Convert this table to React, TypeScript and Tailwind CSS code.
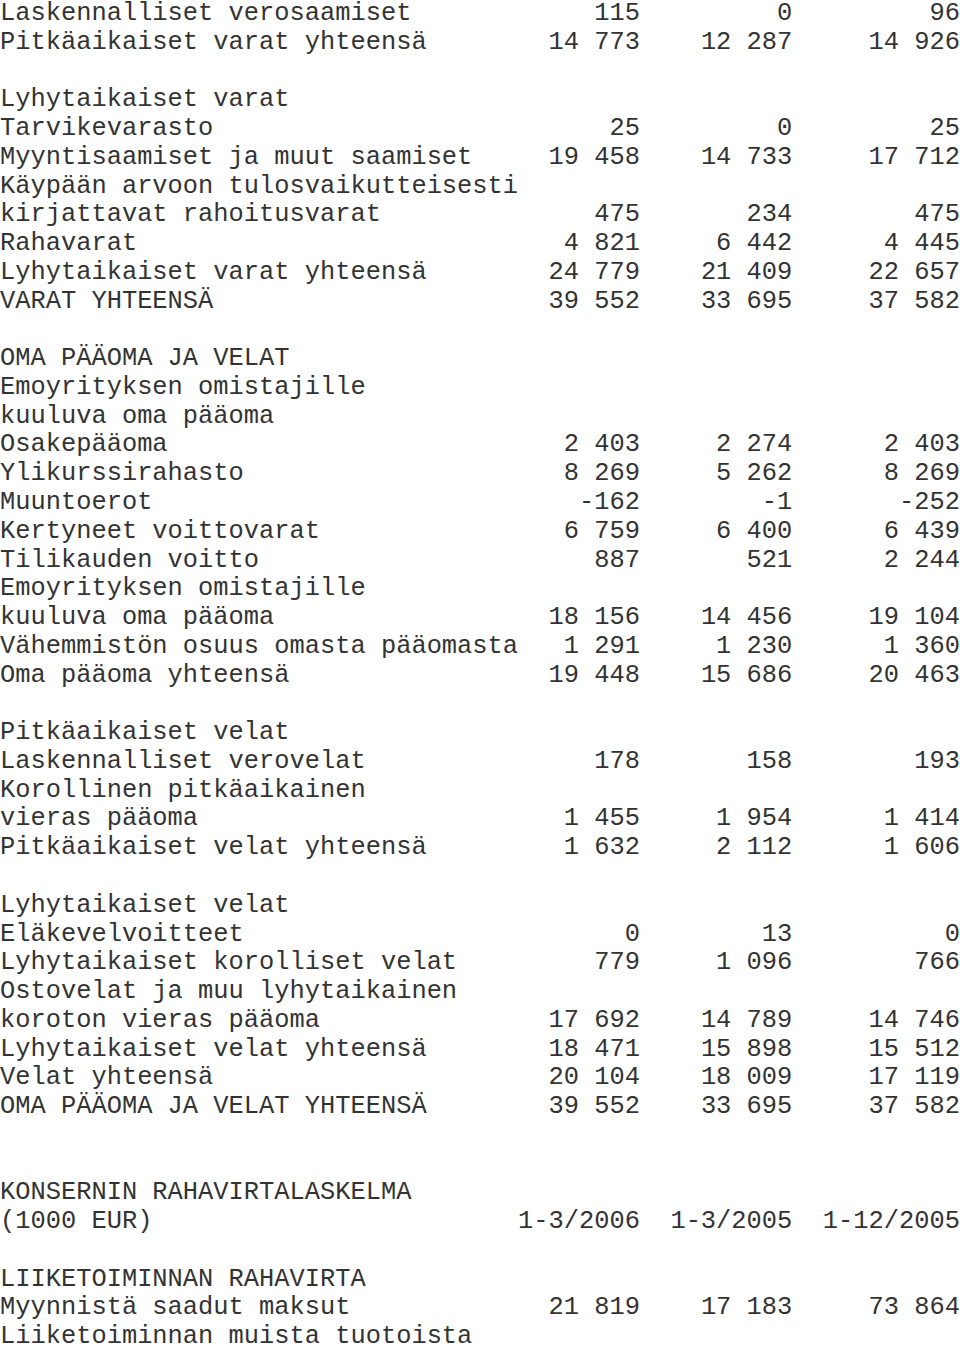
type Row = [string, string?, string?, string?];

const rows: Row[] = [
  ["Laskennalliset verosaamiset", "115", "0", "96"],
  ["Pitkäaikaiset varat yhteensä", "14 773", "12 287", "14 926"],
  [""],
  ["Lyhytaikaiset varat"],
  ["Tarvikevarasto", "25", "0", "25"],
  ["Myyntisaamiset ja muut saamiset", "19 458", "14 733", "17 712"],
  ["Käypään arvoon tulosvaikutteisesti"],
  ["kirjattavat rahoitusvarat", "475", "234", "475"],
  ["Rahavarat", "4 821", "6 442", "4 445"],
  ["Lyhytaikaiset varat yhteensä", "24 779", "21 409", "22 657"],
  ["VARAT YHTEENSÄ", "39 552", "33 695", "37 582"],
  [""],
  ["OMA PÄÄOMA JA VELAT"],
  ["Emoyrityksen omistajille"],
  ["kuuluva oma pääoma"],
  ["Osakepääoma", "2 403", "2 274", "2 403"],
  ["Ylikurssirahasto", "8 269", "5 262", "8 269"],
  ["Muuntoerot", "-162", "-1", "-252"],
  ["Kertyneet voittovarat", "6 759", "6 400", "6 439"],
  ["Tilikauden voitto", "887", "521", "2 244"],
  ["Emoyrityksen omistajille"],
  ["kuuluva oma pääoma", "18 156", "14 456", "19 104"],
  ["Vähemmistön osuus omasta pääomasta", "1 291", "1 230", "1 360"],
  ["Oma pääoma yhteensä", "19 448", "15 686", "20 463"],
  [""],
  ["Pitkäaikaiset velat"],
  ["Laskennalliset verovelat", "178", "158", "193"],
  ["Korollinen pitkäaikainen"],
  ["vieras pääoma", "1 455", "1 954", "1 414"],
  ["Pitkäaikaiset velat yhteensä", "1 632", "2 112", "1 606"],
  [""],
  ["Lyhytaikaiset velat"],
  ["Eläkevelvoitteet", "0", "13", "0"],
  ["Lyhytaikaiset korolliset velat", "779", "1 096", "766"],
  ["Ostovelat ja muu lyhytaikainen"],
  ["koroton vieras pääoma", "17 692", "14 789", "14 746"],
  ["Lyhytaikaiset velat yhteensä", "18 471", "15 898", "15 512"],
  ["Velat yhteensä", "20 104", "18 009", "17 119"],
  ["OMA PÄÄOMA JA VELAT YHTEENSÄ", "39 552", "33 695", "37 582"],
  [""],
  [""],
  ["KONSERNIN RAHAVIRTALASKELMA"],
  ["(1000 EUR)", "1-3/2006", "1-3/2005", "1-12/2005"],
  [""],
  ["LIIKETOIMINNAN RAHAVIRTA"],
  ["Myynnistä saadut maksut", "21 819", "17 183", "73 864"],
  ["Liiketoiminnan muista tuotoista"],
];

export default function App() {
  return (
    <div className="w-[960px] h-[1346px] overflow-hidden bg-white text-[#333333]">
      <div className="font-['Liberation_Mono','Courier_New',monospace] text-[25.4px] leading-[28.76px]">
        {rows.map(([label, a, b, c], i) => (
          <div key={i} className="grid grid-cols-[34ch_8ch_10ch_11ch] whitespace-pre">
            <span>{label || "\u00a0"}</span>
            <span className="text-right">{a}</span>
            <span className="text-right">{b}</span>
            <span className="text-right">{c}</span>
          </div>
        ))}
      </div>
    </div>
  );
}
